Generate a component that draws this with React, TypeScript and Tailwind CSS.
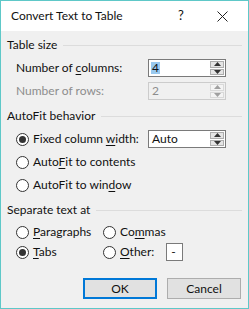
import React from "react";

const font = "font-['Segoe_UI','Lato','Noto_Sans',sans-serif]";

function Acc({ children }: { children: React.ReactNode }) {
  return <span className="underline underline-offset-2 decoration-1">{children}</span>;
}

function GroupHeader({ label, className = "" }: { label: string; className?: string }) {
  return (
    <div className={`flex h-4 items-center gap-[6px] ${className}`}>
      <span className="leading-none">{label}</span>
      <span className="h-px flex-1 bg-[#dcdcdc]" />
    </div>
  );
}

function Radio({ checked = false }: { checked?: boolean }) {
  return (
    <span className="grid h-[13px] w-[13px] shrink-0 place-items-center rounded-full border border-[#333] bg-white">
      {checked ? <span className="h-[7px] w-[7px] rounded-full bg-[#333]" /> : null}
    </span>
  );
}

function Spinner({ disabled = false }: { disabled?: boolean }) {
  const arrow = disabled ? "#a0a0a0" : "#333";
  const box = disabled ? "border-[#d9d9d9] bg-[#f4f4f4]" : "border-[#adadad] bg-[#e5e5e5]";
  return (
    <div className="flex w-[15px] flex-col gap-px py-px pr-px">
      <span className={`grid h-[7px] place-items-center border ${box}`}>
        <svg width="7" height="4" viewBox="0 0 7 4"><path d="M0 4 L3.5 0 L7 4 Z" fill={arrow} /></svg>
      </span>
      <span className={`grid h-[7px] place-items-center border ${box}`}>
        <svg width="7" height="4" viewBox="0 0 7 4"><path d="M0 0 L3.5 4 L7 0 Z" fill={arrow} /></svg>
      </span>
    </div>
  );
}

function SpinBox({ value, disabled = false, selected = false }: { value: string; disabled?: boolean; selected?: boolean }) {
  return (
    <div
      className={`flex h-[18px] w-[78px] items-stretch justify-between border ${
        disabled ? "border-[#cccccc] bg-[#f0f0f0] text-[#8d8d8d]" : "border-[#7a7a7a] bg-white text-[#111]"
      }`}
    >
      <span className="flex items-center pl-[2px] leading-none">
        <span className={selected ? "bg-[#99c9ef] px-px" : "px-px"}>{value}</span>
      </span>
      <Spinner disabled={disabled} />
    </div>
  );
}

function Button({ label, primary = false }: { label: string; primary?: boolean }) {
  return (
    <button
      type="button"
      className={`h-[21px] w-[74px] bg-[#e1e1e1] leading-none text-[#111] ${
        primary ? "border-2 border-[#0078d7]" : "border border-[#adadad]"
      }`}
    >
      {label}
    </button>
  );
}

export default function App() {
  return (
    <div className={`flex h-[309px] w-[249px] flex-col border border-[#5ec8c8] bg-[#f0f0f0] text-[12px] text-[#111] ${font}`}>
      {/* title bar */}
      <div className="flex h-[30px] shrink-0 items-center bg-white pl-[10px]">
        <span className="flex-1 text-[12px]">Convert Text to Table</span>
        <span className="w-[18px] text-[13px]">?</span>
        <span className="grid w-[52px] place-items-center">
          <svg width="11" height="11" viewBox="0 0 11 11">
            <path d="M0.5 0.5 L10.5 10.5 M10.5 0.5 L0.5 10.5" stroke="#222" strokeWidth="1" />
          </svg>
        </span>
      </div>

      {/* body */}
      <div className="flex flex-1 flex-col px-[6px] pt-[6px]">
        <GroupHeader label="Table size" />
        <div className="mt-[6px] flex h-[18px] items-center justify-between pl-[9px] pr-[16px]">
          <span>Number of <Acc>c</Acc>olumns:</span>
          <SpinBox value="4" selected />
        </div>
        <div className="mt-[5px] flex h-[18px] items-center justify-between pl-[9px] pr-[16px] text-[#8d8d8d]">
          <span>Number of rows:</span>
          <SpinBox value="2" disabled />
        </div>

        <GroupHeader label="AutoFit behavior" className="mt-[8px]" />
        <div className="mt-[6px] flex h-[18px] items-center justify-between pl-[9px] pr-[16px]">
          <span className="flex items-center gap-[4px]">
            <Radio checked />
            <span>Fixed column <Acc>w</Acc>idth:</span>
          </span>
          <SpinBox value="Auto" />
        </div>
        <div className="mt-[5px] flex h-[18px] items-center gap-[4px] pl-[9px]">
          <Radio />
          <span>Auto<Acc>F</Acc>it to contents</span>
        </div>
        <div className="mt-[5px] flex h-[18px] items-center gap-[4px] pl-[9px]">
          <Radio />
          <span>AutoFit to win<Acc>d</Acc>ow</span>
        </div>

        <GroupHeader label="Separate text at" className="mt-[8px]" />
        <div className="mt-[5px] grid h-[18px] grid-cols-[87px_1fr] items-center pl-[9px]">
          <span className="flex items-center gap-[4px]">
            <Radio />
            <span><Acc>P</Acc>aragraphs</span>
          </span>
          <span className="flex items-center gap-[4px]">
            <Radio />
            <span>Co<Acc>m</Acc>mas</span>
          </span>
        </div>
        <div className="mt-[2px] grid h-[18px] grid-cols-[87px_1fr] items-center pl-[9px]">
          <span className="flex items-center gap-[4px]">
            <Radio checked />
            <span><Acc>T</Acc>abs</span>
          </span>
          <span className="flex items-center gap-[4px]">
            <Radio />
            <span><Acc>O</Acc>ther:</span>
            <span className="ml-[8px] flex h-[18px] w-[17px] items-center border border-[#7a7a7a] bg-white pl-[4px] leading-none">-</span>
          </span>
        </div>

        <div className="mt-[17px] flex justify-end gap-[10px] pr-[1px]">
          <Button label="OK" primary />
          <Button label="Cancel" />
        </div>
      </div>
    </div>
  );
}
